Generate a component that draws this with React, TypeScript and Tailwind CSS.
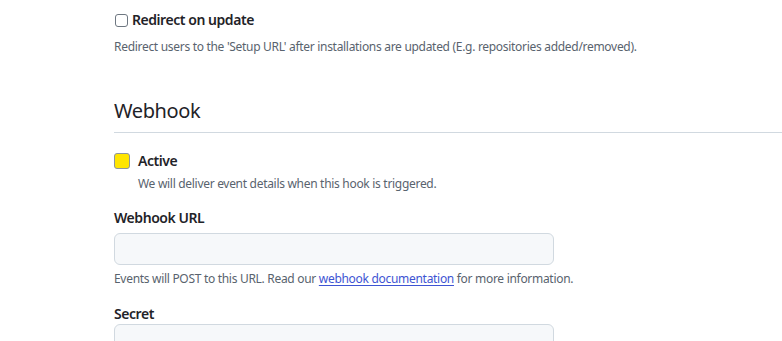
import React from 'react'

const labelClass = 'block text-sm font-semibold text-[#1f2328] leading-5 tracking-[-0.45px]'
const noteClass = 'text-xs text-[#59636e] leading-[18px] tracking-[-0.3px]'
const inputClass = 'block w-[440px] h-8 rounded-md border border-[#d1d9e0] bg-[#f6f8fa] px-3 text-sm'

export default function App() {
  return (
    <div className="min-h-screen bg-white pl-[114px] pt-[10px] text-[#1f2328]" style={{ fontFamily: '"Noto Sans", "Liberation Sans", sans-serif' }}>
      <div className="flex items-center h-5">
        <span className="w-[13px] h-[13px] ml-px rounded-[3px] border border-[#6e7781] bg-white" />
        <span className="ml-[4px] text-sm font-semibold tracking-[-0.45px]">Redirect on update</span>
      </div>
      <p className={`${noteClass} mt-[8px]`}>
        Redirect users to the 'Setup URL' after installations are updated (E.g. repositories added/removed).
      </p>

      <div className="mt-[41px] border-b border-[#d1d9e0] pb-[7px]">
        <h2 className="text-[20px] leading-[28px] font-normal tracking-[-0.4px]">Webhook</h2>
      </div>

      <div className="flex items-center h-5 mt-[18px]">
        <span className="w-4 h-4 rounded-[3px] border border-[#8c959f] bg-[#ffe500]" />
        <span className="ml-2 text-sm font-semibold tracking-[-0.45px]">Active</span>
      </div>
      <p className={`${noteClass} mt-[4px] pl-6`}>We will deliver event details when this hook is triggered.</p>

      <label className={`${labelClass} mt-[15px]`}>Webhook URL</label>
      <input type="text" className={`${inputClass} mt-[5px]`} />
      <p className={`${noteClass} mt-[5px]`}>
        Events will POST to this URL. Read our{' '}
        <a href="#" className="text-[#3e54d3] underline decoration-[#3e54d3] underline-offset-2">webhook documentation</a>{' '}
        for more information.
      </p>

      <label className={`${labelClass} mt-[16px]`}>Secret</label>
      <input type="text" className={`${inputClass} mt-0`} />
    </div>
  )
}
